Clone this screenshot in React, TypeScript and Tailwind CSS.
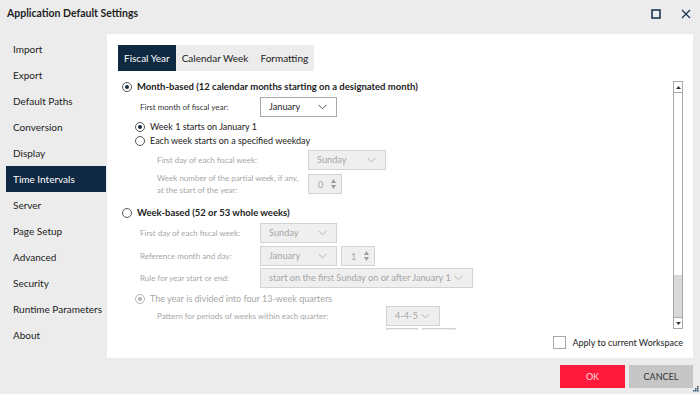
import React from 'react';

const FONT = { fontFamily: 'Lato, "Noto Sans", sans-serif' };

function Chevron({ muted }: { muted?: boolean }) {
  return (
    <svg width="9" height="6" viewBox="0 0 9 6" className="shrink-0">
      <polyline points="0.5,0.8 4.5,4.8 8.5,0.8" fill="none" stroke={muted ? '#b5b5b5' : '#555'} strokeWidth="1" />
    </svg>
  );
}

function Radio({ checked, muted }: { checked?: boolean; muted?: boolean }) {
  return (
    <span
      className={`w-[10px] h-[10px] rounded-full border flex items-center justify-center shrink-0 ${
        muted ? 'border-[#b8b8b8]' : 'border-[#555]'
      }`}
    >
      {checked && <span className={`w-[4px] h-[4px] rounded-full ${muted ? 'bg-[#b0b0b0]' : 'bg-[#1c2b3b]'}`} />}
    </span>
  );
}

function Select({ value, width, disabled }: { value: string; width: string; disabled?: boolean }) {
  return (
    <div
      className={`${width} h-[20px] border flex items-center justify-between pl-[8px] pr-[9px] text-[9.2px] ${
        disabled ? 'bg-[#efefef] border-[#d3d3d3] text-[#a6a6a6]' : 'bg-white border-[#a8a8a8] text-[#222]'
      }`}
    >
      <span className="whitespace-nowrap">{value}</span>
      <Chevron muted={disabled} />
    </div>
  );
}

function Spinner({ value }: { value: string }) {
  return (
    <div className="w-[34px] h-[20px] border border-[#d3d3d3] bg-[#efefef] flex items-center justify-between pl-[9px] pr-[5px] text-[9px] text-[#a6a6a6]">
      <span>{value}</span>
      <span className="flex flex-col gap-[2px]">
        <svg width="5" height="4" viewBox="0 0 5 4"><polygon points="2.5,0 5,4 0,4" fill="#9a9a9a" /></svg>
        <svg width="5" height="4" viewBox="0 0 5 4"><polygon points="0,0 5,0 2.5,4" fill="#9a9a9a" /></svg>
      </span>
    </div>
  );
}

const menu = [
  'Import',
  'Export',
  'Default Paths',
  'Conversion',
  'Display',
  'Time Intervals',
  'Server',
  'Page Setup',
  'Advanced',
  'Security',
  'Runtime Parameters',
  'About',
];

export default function App() {
  return (
    <div className="w-[700px] h-[394px] bg-[#ececec] flex flex-col overflow-hidden text-[#222]" style={FONT}>
      {/* title bar */}
      <div className="h-[34px] flex items-center justify-between pl-[7px] pr-[9px]">
        <span className="text-[10.5px] font-bold text-[#1e1e1e] -mt-[7px]">Application Default Settings</span>
        <div className="flex items-center gap-[20px] -mt-[6px]">
          <svg width="10" height="10" viewBox="0 0 10 10">
            <rect x="1" y="1" width="8" height="8" fill="none" stroke="#1d3756" strokeWidth="1.6" />
          </svg>
          <svg width="10" height="10" viewBox="0 0 10 10">
            <path d="M1 1 L9 9 M9 1 L1 9" stroke="#1d3756" strokeWidth="1.3" />
          </svg>
        </div>
      </div>

      <div className="flex h-[324px]">
        {/* sidebar */}
        <div className="w-[107px] pt-[2px] flex flex-col">
          {menu.map((m) => (
            <div
              key={m}
              className={`ml-[6px] w-[100px] h-[26px] flex items-center pl-[7px] pt-[1px] text-[10px] whitespace-nowrap ${
                m === 'Time Intervals' ? 'bg-[#0f2942] text-white' : 'text-[#222]'
              }`}
            >
              {m}
            </div>
          ))}
        </div>

        {/* main panel */}
        <div className="w-[586px] bg-white flex flex-col">
          <div className="pl-[11px] pt-[11px] flex">
            <div className="h-[26px] px-[6px] flex items-center bg-[#0f2942] text-white text-[10px]">Fiscal Year</div>
            <div className="h-[26px] px-[6px] flex items-center bg-[#ececec] text-[10px]">Calendar Week</div>
            <div className="h-[26px] px-[6px] flex items-center bg-[#ececec] text-[10px]">Formatting</div>
          </div>

          <div className="h-[259px] flex overflow-hidden">
            <div className="flex-1 pl-[15px] pt-[9px] flex flex-col">
              <div className="h-[15px] flex items-center gap-[5px]">
                <Radio checked />
                <span className="text-[9.5px] font-bold whitespace-nowrap">Month-based (12 calendar months starting on a designated month)</span>
              </div>
              <div className="ml-[15px] w-[349px] h-[1px] bg-[#bdbdbd] mt-[1px]" />

              <div className="mt-[2px] h-[20px] flex items-center">
                <span className="ml-[18px] w-[120px] text-[8px] text-[#333]">First month of fiscal year:</span>
                <Select value="January" width="w-[77px]" />
              </div>

              <div className="mt-[3px] h-[14px] flex items-center gap-[5px] pl-[13px]">
                <Radio checked />
                <span className="text-[9px] whitespace-nowrap">Week 1 starts on January 1</span>
              </div>
              <div className="h-[14px] flex items-center gap-[5px] pl-[13px]">
                <Radio />
                <span className="text-[9px] whitespace-nowrap">Each week starts on a specified weekday</span>
              </div>

              <div className="mt-[3px] h-[20px] flex items-center">
                <span className="ml-[35px] w-[151px] text-[8px] text-[#a6a6a6]">First day of each fiscal week:</span>
                <Select value="Sunday" width="w-[78px]" disabled />
              </div>
              <div className="mt-[4px] h-[20px] flex items-center">
                <span className="ml-[35px] w-[151px] text-[8px] leading-[12px] text-[#a6a6a6] whitespace-nowrap">
                  Week number of the partial week, if any,
                  <br />
                  at the start of the year:
                </span>
                <Spinner value="0" />
              </div>

              <div className="mt-[12px] h-[14px] flex items-center gap-[5px]">
                <Radio />
                <span className="text-[9.5px] font-bold whitespace-nowrap">Week-based (52 or 53 whole weeks)</span>
              </div>
              <div className="ml-[15px] w-[349px] h-[1px] bg-[#bdbdbd] mt-[1px]" />

              <div className="mt-[2px] h-[20px] flex items-center">
                <span className="ml-[18px] w-[120px] text-[8px] text-[#a6a6a6]">First day of each fiscal week:</span>
                <Select value="Sunday" width="w-[77px]" disabled />
              </div>
              <div className="mt-[3px] h-[20px] flex items-center gap-[4px]">
                <span className="ml-[18px] w-[116px] text-[8px] text-[#a6a6a6]">Reference month and day:</span>
                <Select value="January" width="w-[77px]" disabled />
                <Spinner value="1" />
              </div>
              <div className="mt-[2px] h-[20px] flex items-center">
                <span className="ml-[18px] w-[120px] text-[8px] text-[#a6a6a6]">Rule for year start or end:</span>
                <Select value="start on the first Sunday on or after January 1" width="w-[213px]" disabled />
              </div>

              <div className="mt-[4px] h-[14px] flex items-center gap-[5px] pl-[13px]">
                <Radio checked muted />
                <span className="text-[9px] text-[#a6a6a6] whitespace-nowrap">The year is divided into four 13-week quarters</span>
              </div>
              <div className="h-[20px] flex items-center">
                <span className="ml-[35px] w-[229px] text-[8px] text-[#a6a6a6]">Pattern for periods of weeks within each quarter:</span>
                <Select value="4-4-5" width="w-[54px]" disabled />
              </div>
              <div className="mt-[2px] flex gap-[4px] ml-[264px]">
                <div className="w-[32px] h-[20px] border border-[#d3d3d3] bg-[#efefef]" />
                <div className="w-[34px] h-[20px] border border-[#d3d3d3] bg-[#efefef]" />
              </div>
            </div>

            {/* scrollbar */}
            <div className="w-[10px] mr-[10px] mt-[10px] h-[248px] border border-[#a8a8a8] flex flex-col">
              <div className="h-[11px] border-b border-[#a8a8a8] flex items-center justify-center">
                <svg width="5" height="3" viewBox="0 0 5 3"><polygon points="2.5,0 5,3 0,3" fill="#333" /></svg>
              </div>
              <div className="flex-1 flex flex-col">
                <div className="flex-1 bg-white" />
                <div className="h-[42px] bg-[#d9d9d9]" />
              </div>
              <div className="h-[11px] border-t border-[#a8a8a8] flex items-center justify-center">
                <svg width="5" height="3" viewBox="0 0 5 3"><polygon points="0,0 5,0 2.5,3" fill="#333" /></svg>
              </div>
            </div>
          </div>

          <div className="flex justify-end items-start pr-[10px] pt-[6px] gap-[6px]">
            <div className="w-[13px] h-[13px] border border-[#a8a8a8] bg-white" />
            <span className="text-[9px] leading-[13px] whitespace-nowrap">Apply to current Workspace</span>
          </div>
        </div>
      </div>

      {/* footer */}
      <div className="flex-1 flex justify-end items-start pt-[7px] pr-[7px] gap-[4px] relative">
        <div className="w-[65px] h-[23px] bg-[#ff1a3c] text-[#ffd9de] text-[9px] flex items-center justify-center">OK</div>
        <div className="w-[64px] h-[23px] bg-[#c6c6c6] text-[#333] text-[9px] flex items-center justify-center">CANCEL</div>
        <svg width="7" height="7" viewBox="0 0 7 7" className="absolute right-[1px] bottom-[1px]">
          <rect x="5" y="0" width="1.5" height="1.5" fill="#2a4a6a" />
          <rect x="3" y="2" width="1.5" height="1.5" fill="#2a4a6a" />
          <rect x="5" y="2" width="1.5" height="1.5" fill="#2a4a6a" />
          <rect x="1" y="4" width="1.5" height="1.5" fill="#2a4a6a" />
          <rect x="3" y="4" width="1.5" height="1.5" fill="#2a4a6a" />
          <rect x="5" y="4" width="1.5" height="1.5" fill="#2a4a6a" />
        </svg>
      </div>
    </div>
  );
}
